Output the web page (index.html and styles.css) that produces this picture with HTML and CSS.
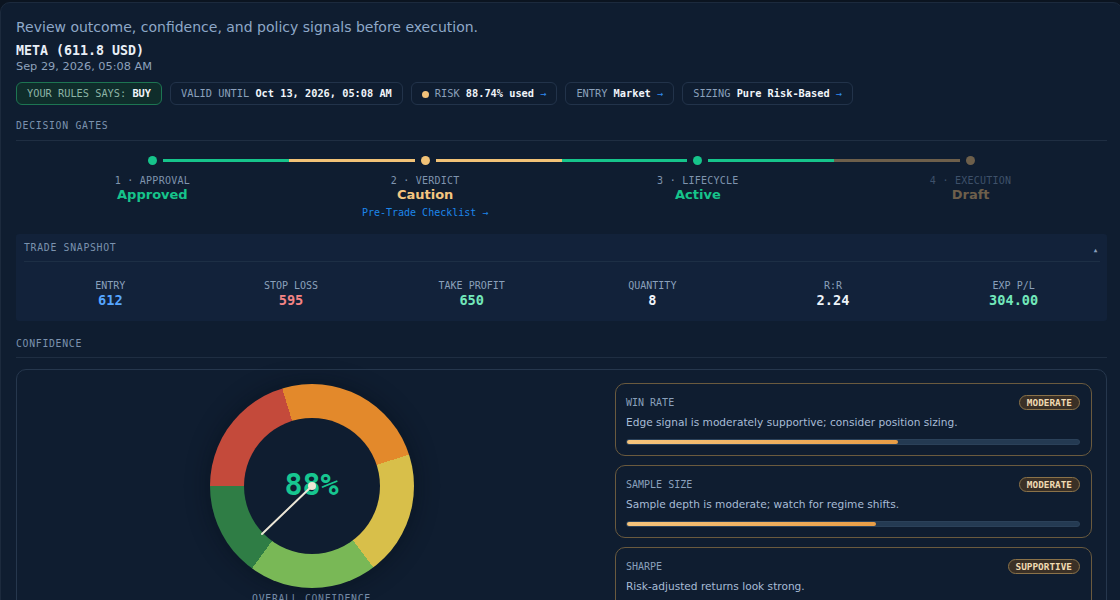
FILE: index.html
```html
<!DOCTYPE html>
<html lang="en">
<head>
  <meta charset="UTF-8" />
  <title>Trade Decision Review</title>
  <link rel="stylesheet" href="styles.css">
</head>
<body>
  <div class="panel">
    <p class="intro">Review outcome, confidence, and policy signals before execution.</p>
    <div class="symbol">META (611.8 USD)</div>
    <div class="stamp">Sep 29, 2026, 05:08 AM</div>

    <div class="chips">
      <span class="chip chip-buy">YOUR RULES SAYS: <b>BUY</b></span>
      <span class="chip">VALID UNTIL <b>Oct 13, 2026, 05:08 AM</b></span>
      <span class="chip"><i class="dot-risk"></i>RISK <b>88.74% used</b> <em>→</em></span>
      <span class="chip">ENTRY <b>Market</b> <em>→</em></span>
      <span class="chip">SIZING <b>Pure Risk-Based</b> <em>→</em></span>
    </div>

    <div class="section-title">DECISION GATES</div>
    <div class="gates">
      <div class="gate green first">
        <div class="track"><span class="seg"></span><span class="dot"></span><span class="seg"></span></div>
        <div class="gate-label">1 · APPROVAL</div>
        <div class="gate-state">Approved</div>
      </div>
      <div class="gate amber">
        <div class="track"><span class="seg"></span><span class="dot"></span><span class="seg"></span></div>
        <div class="gate-label">2 · VERDICT</div>
        <div class="gate-state">Caution</div>
        <a class="gate-link" href="#">Pre-Trade Checklist →</a>
      </div>
      <div class="gate green">
        <div class="track"><span class="seg"></span><span class="dot"></span><span class="seg"></span></div>
        <div class="gate-label">3 · LIFECYCLE</div>
        <div class="gate-state">Active</div>
      </div>
      <div class="gate muted last">
        <div class="track"><span class="seg"></span><span class="dot"></span><span class="seg"></span></div>
        <div class="gate-label">4 · EXECUTION</div>
        <div class="gate-state">Draft</div>
      </div>
    </div>

    <div class="snapshot">
      <div class="snapshot-head">
        <span>TRADE SNAPSHOT</span>
        <span class="caret">▲</span>
      </div>
      <div class="stats">
        <div class="stat"><div class="stat-label">ENTRY</div><div class="stat-value blue">612</div></div>
        <div class="stat"><div class="stat-label">STOP LOSS</div><div class="stat-value red">595</div></div>
        <div class="stat"><div class="stat-label">TAKE PROFIT</div><div class="stat-value mint">650</div></div>
        <div class="stat"><div class="stat-label">QUANTITY</div><div class="stat-value">8</div></div>
        <div class="stat"><div class="stat-label">R:R</div><div class="stat-value">2.24</div></div>
        <div class="stat"><div class="stat-label">EXP P/L</div><div class="stat-value mint">304.00</div></div>
      </div>
    </div>

    <div class="section-title confidence-title">CONFIDENCE</div>
    <div class="confidence">
      <div class="gauge-col">
        <div class="gauge">
          <div class="hole">
            <span class="gauge-value">88%</span>
          </div>
          <svg class="needle" width="204" height="204" viewBox="0 0 204 204">
            <line x1="102" y1="102" x2="52" y2="150" stroke="#ece6d6" stroke-width="2" stroke-linecap="round"/>
            <circle cx="102" cy="102" r="4" fill="#efe7d4"/>
          </svg>
        </div>
        <div class="gauge-caption">OVERALL CONFIDENCE</div>
      </div>

      <div class="signals">
        <div class="signal">
          <div class="signal-head"><span>WIN RATE</span><span class="badge">MODERATE</span></div>
          <div class="signal-text">Edge signal is moderately supportive; consider position sizing.</div>
          <div class="bar"><div class="fill" style="width: 60%"></div></div>
        </div>
        <div class="signal">
          <div class="signal-head"><span>SAMPLE SIZE</span><span class="badge">MODERATE</span></div>
          <div class="signal-text">Sample depth is moderate; watch for regime shifts.</div>
          <div class="bar"><div class="fill" style="width: 55%"></div></div>
        </div>
        <div class="signal">
          <div class="signal-head"><span>SHARPE</span><span class="badge">SUPPORTIVE</span></div>
          <div class="signal-text">Risk-adjusted returns look strong.</div>
          <div class="bar"><div class="fill" style="width: 78%"></div></div>
        </div>
      </div>
    </div>
  </div>
</body>
</html>
```

FILE: styles.css
```css
html, body {
  overflow: hidden;
}
body {
  margin: 0;
  background: #0b1420;
  font-family: "DejaVu Sans", sans-serif;
  color: #e9eff7;
}
.panel {
  box-sizing: border-box;
  width: 1123px;
  margin-top: 2px;
  padding: 14px 15px 20px;
  background: #0f1d30;
  border: 1px solid #1c2a3d;
  border-radius: 10px;
}
.intro {
  margin: 0;
  font-size: 14px;
  line-height: 20px;
  color: #8ea8c8;
}
.symbol {
  margin-top: 5px;
  font-family: "DejaVu Sans Mono", monospace;
  font-weight: bold;
  font-size: 13.3px;
  line-height: 18px;
}
.stamp {
  font-size: 11.3px;
  line-height: 13px;
  color: #8ea2bc;
}
.chips {
  display: flex;
  gap: 8px;
  margin-top: 9px;
}
.chip {
  display: block;
  height: 21px;
  line-height: 21px;
  padding: 0 10px;
  border: 1px solid #22334a;
  border-radius: 6px;
  font-family: "DejaVu Sans Mono", monospace;
  font-size: 10.3px;
  color: #8aa0bb;
  white-space: pre;
}
.chip b {
  color: #f1f5fa;
}
.chip em {
  font-style: normal;
  color: #2f8cf0;
}
.chip-buy {
  background: #0f2d2b;
  border-color: #1d7552;
  color: #8cb4a6;
}
.dot-risk {
  display: inline-block;
  vertical-align: -1px;
  width: 7px;
  height: 7px;
  margin-right: 6px;
  border-radius: 50%;
  background: #f2c27a;
}
.section-title {
  margin-top: 15px;
  padding-bottom: 9px;
  border-bottom: 1px solid #1f2e42;
  font-family: "DejaVu Sans Mono", monospace;
  font-size: 9.8px;
  letter-spacing: 0.7px;
  color: #7b92ae;
}
.confidence-title {
  margin-top: 17px;
  padding-bottom: 8px;
}
.gates {
  display: grid;
  grid-template-columns: repeat(4, 1fr);
  margin-top: 15px;
  text-align: center;
}
.track {
  display: flex;
  align-items: center;
  gap: 6px;
  height: 9px;
}
.seg {
  flex: 1;
  height: 3px;
  background: var(--c);
}
.first .seg:first-child,
.last .seg:last-child {
  visibility: hidden;
}
.dot {
  width: 9px;
  height: 9px;
  border-radius: 50%;
  background: var(--c);
}
.green { --c: #16c48b; }
.amber { --c: #f1c277; }
.muted { --c: #6d5f4b; }
.gate-label {
  margin-top: 10px;
  font-family: "DejaVu Sans Mono", monospace;
  font-size: 10px;
  letter-spacing: 0.25px;
  color: #7f94ae;
}
.muted .gate-label {
  color: #3e516a;
}
.gate-state {
  margin-top: 1px;
  font-weight: bold;
  font-size: 13px;
  line-height: 16px;
  color: var(--c);
}
.amber .gate-state { color: #f4c680; }
.gate-link {
  display: block;
  margin-top: 4px;
  font-family: "DejaVu Sans Mono", monospace;
  font-size: 10px;
  color: #1d86ea;
  text-decoration: none;
}
.snapshot {
  margin-top: 16px;
  padding: 0 7px 0 8px;
  background: #12223a;
  border-radius: 3px;
}
.snapshot-head {
  display: flex;
  justify-content: space-between;
  align-items: center;
  height: 27px;
  border-bottom: 1px solid #1d2f45;
  font-family: "DejaVu Sans Mono", monospace;
  font-size: 9.8px;
  letter-spacing: 0.7px;
  color: #7b92ae;
}
.caret {
  font-size: 6px;
  color: #8aa0bb;
  margin: 3px 2px 0 0;
}
.stats {
  display: grid;
  grid-template-columns: repeat(6, 1fr);
  padding: 18px 0 13px;
  margin: 0 -4px;
  text-align: center;
  font-family: "DejaVu Sans Mono", monospace;
}
.stat-label {
  font-size: 10px;
  line-height: 12px;
  color: #8aa0bb;
}
.stat-value {
  font-weight: bold;
  font-size: 13.6px;
  line-height: 16px;
  color: #eef3f9;
}
.blue { color: #56a6ff; }
.red { color: #f48484; }
.mint { color: #72e8bb; }
.confidence {
  display: grid;
  grid-template-columns: 1fr 477px;
  gap: 10px;
  margin-top: 11px;
  padding: 13px 14px 14px 1px;
  border: 1px solid #26374d;
  border-radius: 10px;
}
.gauge-col {
  display: flex;
  flex-direction: column;
  align-items: center;
  padding-top: 1px;
}
.gauge {
  position: relative;
  width: 204px;
  height: 204px;
  border-radius: 50%;
  display: flex;
  align-items: center;
  justify-content: center;
  background: conic-gradient(#e3892b 0 72deg, #d8bf4a 72deg 143deg, #79b856 143deg 216deg, #2f7d45 216deg 270deg, #c44a3b 270deg 343deg, #e3892b 343deg 360deg);
  box-shadow: 0 0 24px rgba(4, 10, 18, 0.45);
}
.hole {
  width: 136px;
  height: 136px;
  border-radius: 50%;
  background: #0f1d30;
  display: flex;
  align-items: center;
  justify-content: center;
}
.gauge-value {
  font-family: "DejaVu Sans Mono", monospace;
  font-weight: bold;
  font-size: 30px;
  color: #17c690;
  margin-top: -4px;
}
.needle {
  position: absolute;
  left: 0;
  top: 0;
}
.gauge-caption {
  margin-top: 5px;
  font-family: "DejaVu Sans Mono", monospace;
  font-size: 9.8px;
  letter-spacing: 0.7px;
  color: #7b92ae;
}
.signals {
  display: flex;
  flex-direction: column;
  gap: 9px;
}
.signal {
  padding: 11px 11px 10px 10px;
  border: 1px solid #6a5a3e;
  border-radius: 10px;
}
.signal-head {
  display: flex;
  justify-content: space-between;
  align-items: center;
  height: 15px;
  font-family: "DejaVu Sans Mono", monospace;
  font-size: 10px;
  color: #8aa0bb;
}
.badge {
  padding: 0 7px;
  line-height: 13px;
  border: 1px solid #8a7249;
  border-radius: 8px;
  background: #3a3026;
  font-weight: bold;
  font-size: 9.4px;
  color: #f0dab2;
}
.signal-text {
  margin-top: 4px;
  font-size: 10.6px;
  line-height: 16px;
  color: #a7bcd6;
}
.bar {
  margin-top: 9px;
  height: 6px;
  border-radius: 3px;
  background: #243a52;
  border: 1px solid #2b4159;
  box-sizing: border-box;
}
.fill {
  height: 100%;
  border-radius: 3px;
  background: linear-gradient(90deg, #f5c47c, #e89d46);
}
```
